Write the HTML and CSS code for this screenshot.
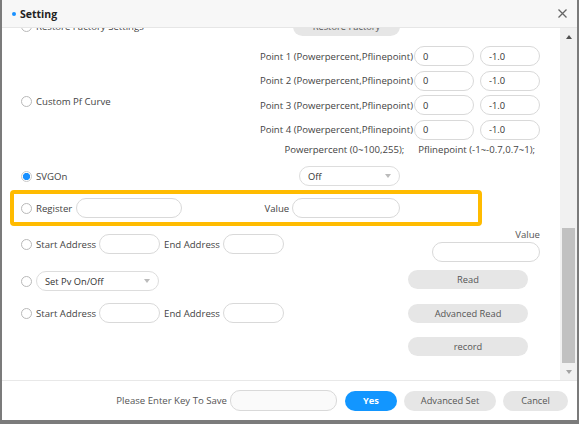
FILE: index.html
```html
<!DOCTYPE html>
<html lang="en">
<head>
  <meta charset="UTF-8">
  <title>Setting</title>
  <link rel="stylesheet" href="styles.css">
</head>
<body>

<div class="dialog">
  <div class="head">
    <span class="dot"></span>
    <span class="title">Setting</span>
    <svg class="close" width="9" height="9" viewBox="0 0 9 9">
      <path d="M0.5 0.5L8.5 8.5M8.5 0.5L0.5 8.5" stroke="#666" stroke-width="1.3" fill="none"/>
    </svg>
  </div>

  <div class="body">
    <div class="content">
      <div class="inner">

        <div class="row">
          <label class="opt"><input type="radio" name="mode">Restore Factory Settings</label>
          <button class="btn restore-btn">Restore Factory</button>
        </div>

        <div class="pf">
          <label class="opt"><input type="radio" name="mode">Custom Pf Curve</label>
          <div class="points">
            <div class="point"><span>Point 1 (Powerpercent,Pflinepoint)</span><input class="field pt" value="0"><input class="field pt" value="-1.0"></div>
            <div class="point"><span>Point 2 (Powerpercent,Pflinepoint)</span><input class="field pt" value="0"><input class="field pt" value="-1.0"></div>
            <div class="point"><span>Point 3 (Powerpercent,Pflinepoint)</span><input class="field pt" value="0"><input class="field pt" value="-1.0"></div>
            <div class="point"><span>Point 4 (Powerpercent,Pflinepoint)</span><input class="field pt" value="0"><input class="field pt" value="-1.0"></div>
            <div class="note"><span>Powerpercent (0~100,255);</span><span>Pflinepoint (-1~-0.7,0.7~1);</span></div>
          </div>
        </div>

        <div class="row svg-row">
          <label class="opt svg-opt"><input type="radio" name="mode" checked>SVGOn</label>
          <div class="select off-select"><span>Off</span><span class="caret"></span></div>
        </div>

        <div class="highlight">
          <label class="opt"><input type="radio" name="mode">Register</label>
          <input class="field reg-field">
          <span class="value-label">Value</span>
          <input class="field value-field">
        </div>

        <div class="lower">
          <div class="left">
            <div class="row">
              <label class="opt"><input type="radio" name="mode">Start Address</label>
              <input class="field addr">
              <span class="end-label">End Address</span>
              <input class="field addr">
            </div>
            <div class="row pv-row">
              <input type="radio" name="mode">
              <div class="select pv-select"><span>Set Pv On/Off</span><span class="caret"></span></div>
            </div>
            <div class="row addr-row">
              <label class="opt"><input type="radio" name="mode">Start Address</label>
              <input class="field addr">
              <span class="end-label">End Address</span>
              <input class="field addr">
            </div>
          </div>
          <div class="right">
            <span class="right-label">Value</span>
            <input class="field right-field">
            <button class="btn side-btn read-btn">Read</button>
            <button class="btn side-btn adv-btn">Advanced Read</button>
            <button class="btn side-btn rec-btn">record</button>
          </div>
        </div>

      </div>
    </div>
    <div class="scrollbar">
      <div class="sb-btn"><span class="arrow-up"></span></div>
      <div class="track"><div class="thumb"></div></div>
      <div class="sb-btn"><span class="arrow-down"></span></div>
    </div>
  </div>

  <div class="foot">
    <span class="key-label">Please Enter Key To Save</span>
    <input class="field key-field" type="password">
    <button class="btn yes-btn">Yes</button>
    <button class="btn foot-btn adv-set">Advanced Set</button>
    <button class="btn foot-btn cancel-btn">Cancel</button>
  </div>
</div>

</body>
</html>
```

FILE: styles.css
```css
body {
  margin: 0;
  font-family: "Open Sans", "Noto Sans", sans-serif;
  font-size: 9.6px;
  color: #444;
  background: #fff;
}
.dialog {
  width: 579px;
  height: 424px;
  box-sizing: border-box;
  border: solid #7b7b7b;
  border-width: 0 2px 4px 2px;
  display: flex;
  flex-direction: column;
  background: #fff;
}
.head {
  flex: none;
  height: 27px;
  border-bottom: 1px solid #e6e6e6;
  background: #f7f7f7;
  display: flex;
  align-items: center;
  padding: 0 10px;
}
.dot {
  width: 4px;
  height: 4px;
  border-radius: 50%;
  background: #1890ff;
  margin-right: 4px;
}
.title {
  font-weight: bold;
  font-size: 10.5px;
  color: #222;
}
.close {
  margin-left: auto;
}
.body {
  flex: none;
  height: 352px;
  display: flex;
  overflow: hidden;
}
.content {
  flex: 1;
  overflow: hidden;
}
.inner {
  margin-top: -12px;
}
.row {
  display: flex;
  align-items: center;
  height: 20px;
  padding-left: 19px;
}
.opt {
  display: flex;
  align-items: center;
}
input[type=radio] {
  appearance: none;
  -webkit-appearance: none;
  flex: none;
  width: 11px;
  height: 11px;
  margin: 0 4px 0 0;
  box-sizing: border-box;
  border: 1px solid #b9b9b9;
  border-radius: 50%;
  background: #fff;
}
input[type=radio]:checked {
  border-color: #c9c9c9;
  background: radial-gradient(circle, #1890ff 0 3.3px, #fff 3.9px);
}
.field {
  box-sizing: border-box;
  height: 20px;
  border: 1px solid #d9d9d9;
  border-radius: 10px;
  padding: 0 8px;
  font-family: inherit;
  font-size: 9.3px;
  color: #333;
  background: #fff;
  outline: none;
}
.btn {
  box-sizing: border-box;
  height: 19px;
  border: none;
  border-radius: 10px;
  background: #e6e6e6;
  color: #555;
  font-family: inherit;
  font-size: 9.3px;
  padding: 0;
}
.restore-btn {
  width: 107px;
  margin-left: auto;
  margin-right: 160px;
}
.pf {
  margin-top: 10px;
  display: flex;
  align-items: center;
  padding: 0 20px 0 19px;
}
.points {
  margin-left: auto;
  display: flex;
  flex-direction: column;
  align-items: flex-end;
}
.point {
  display: flex;
  align-items: center;
  height: 20px;
}
.point + .point {
  margin-top: 4.5px;
}
.point span {
  margin-right: 1px;
}
.pt {
  width: 60px;
  margin-left: 6px;
}
.point span + .pt {
  margin-left: 0;
}
.note {
  display: flex;
  align-items: center;
  height: 16px;
  margin-top: 2px;
  margin-right: 5px;
}
.note span + span {
  margin-left: 14px;
}
.svg-row {
  margin-top: 8.5px;
}
.svg-opt {
  width: 278px;
}
.select {
  box-sizing: border-box;
  height: 20px;
  border: 1px solid #ddd;
  border-radius: 10px;
  padding: 0 8px;
  display: flex;
  align-items: center;
  justify-content: space-between;
  font-size: 9.3px;
  color: #333;
  background: #fff;
}
.caret {
  width: 0;
  height: 0;
  border-left: 3.5px solid transparent;
  border-right: 3.5px solid transparent;
  border-top: 4px solid #bbb;
}
.off-select {
  width: 101px;
}
.highlight {
  box-sizing: border-box;
  height: 36px;
  width: 472px;
  margin: 4px 0 0 8px;
  border: 4px solid #ffbb00;
  border-radius: 4px;
  padding-left: 7px;
  display: flex;
  align-items: center;
}
.reg-field {
  width: 106px;
  margin-left: 4px;
}
.value-label {
  width: 107px;
  text-align: right;
}
.value-field {
  width: 108px;
  margin-left: 3px;
}
.lower {
  display: flex;
}
.left {
  padding-top: 8px;
}
.addr {
  width: 61px;
  margin-left: 3px;
}
.end-label {
  margin-left: 4px;
}
.pv-row {
  margin-top: 17px;
}
.pv-select {
  width: 123px;
}
.addr-row {
  margin-top: 12px;
}
.right {
  width: 132px;
  margin-left: auto;
  margin-right: 20px;
  padding-top: 3px;
  display: flex;
  flex-direction: column;
}
.right-label {
  height: 12px;
  line-height: 12px;
  text-align: right;
  color: #555;
}
.right-field {
  width: 108px;
  align-self: flex-end;
  margin-top: 1px;
}
.side-btn {
  width: 120px;
}
.read-btn {
  margin-top: 8px;
}
.adv-btn {
  margin-top: 14.5px;
}
.rec-btn {
  margin-top: 14px;
}
.scrollbar {
  flex: none;
  width: 17px;
  background: #f1f1f1;
  display: flex;
  flex-direction: column;
}
.sb-btn {
  height: 17px;
  display: flex;
  align-items: center;
  justify-content: center;
}
.arrow-up {
  border-left: 3.5px solid transparent;
  border-right: 3.5px solid transparent;
  border-bottom: 4px solid #505050;
}
.arrow-down {
  border-left: 3.5px solid transparent;
  border-right: 3.5px solid transparent;
  border-top: 4px solid #a3a3a3;
}
.track {
  flex: 1;
}
.thumb {
  margin: 183px 2px 0;
  height: 135px;
  background: #c1c1c1;
}
.foot {
  flex: none;
  height: 39px;
  border-top: 1px solid #e8e8e8;
  display: flex;
  align-items: center;
  justify-content: flex-end;
  padding-right: 9px;
}
.key-label {
  margin-right: 3px;
  color: #555;
}
.key-field {
  width: 107px;
  height: 21px;
  background: #fafafa;
}
.yes-btn {
  width: 52px;
  height: 20px;
  margin-left: 8px;
  background: #1296ff;
  color: #fff;
  font-weight: bold;
}
.foot-btn {
  height: 20px;
  margin-left: 7px;
}
.adv-set {
  width: 92px;
}
.cancel-btn {
  width: 65px;
}
```
